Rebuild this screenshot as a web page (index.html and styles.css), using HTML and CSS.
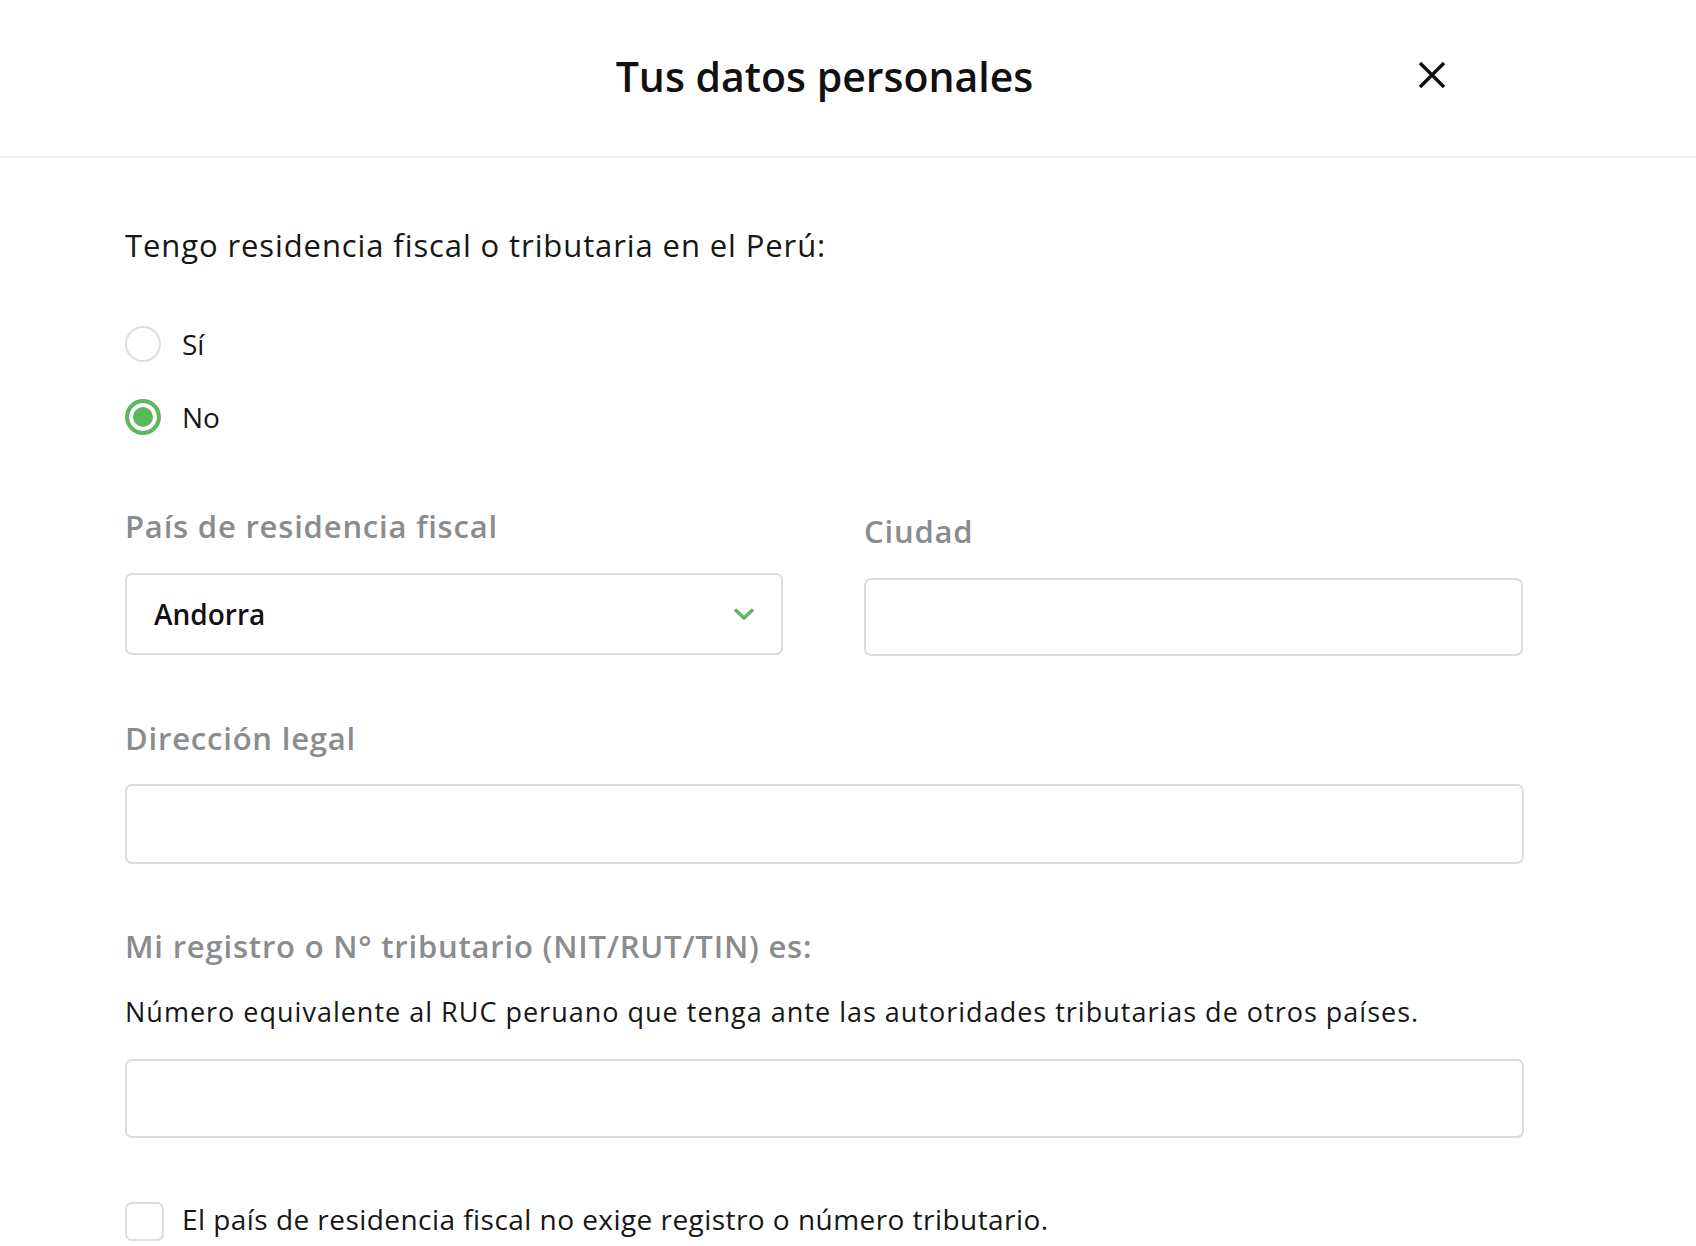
FILE: index.html
```html
<!DOCTYPE html>
<html lang="es">
<head>
<meta charset="utf-8">
<title>Tus datos personales</title>
<link rel="stylesheet" href="styles.css">
</head>
<body>
<div class="modal">
  <header class="modal-header">
    <div class="spacer"></div>
    <h1 class="modal-title">Tus datos personales</h1>
    <button class="close-btn" type="button" aria-label="Cerrar">
      <svg width="28" height="28" viewBox="0 0 28 28"><path d="M2 2 L26 26 M26 2 L2 26" stroke="#111" stroke-width="3.4" fill="none"/></svg>
    </button>
  </header>
  <form class="modal-body">
    <p class="question">Tengo residencia fiscal o tributaria en el Perú:</p>
    <div class="radio-group">
      <label class="radio-row"><span class="radio"></span><span class="option-text">Sí</span></label>
      <label class="radio-row"><span class="radio checked"></span><span class="option-text">No</span></label>
    </div>
    <div class="two-cols">
      <div class="field">
        <div class="field-label">País de residencia fiscal</div>
        <div class="select-box">
          <span class="select-value">Andorra</span>
          <svg class="chevron" width="22" height="14" viewBox="0 0 22 14"><path d="M2 2.5 L11 11 L20 2.5" stroke="#5cb85c" stroke-width="3.4" fill="none"/></svg>
        </div>
      </div>
      <div class="field field-city">
        <div class="field-label">Ciudad</div>
        <div class="text-input short"></div>
      </div>
    </div>
    <div class="field field-block">
      <div class="field-label">Dirección legal</div>
      <div class="text-input"></div>
    </div>
    <div class="field field-block">
      <div class="field-label">Mi registro o N° tributario (NIT/RUT/TIN) es:</div>
      <p class="help">Número equivalente al RUC peruano que tenga ante las autoridades tributarias de otros países.</p>
      <div class="text-input mid"></div>
    </div>
    <label class="check-row"><span class="checkbox"></span><span class="option-text">El país de residencia fiscal no exige registro o número tributario.</span></label>
  </form>
</div>
</body>
</html>
```
FILE: styles.css
```css
html, body {
  margin: 0;
  padding: 0;
  background: #ffffff;
  overflow: hidden;
}
body {
  font-family: "Open Sans", "Noto Sans", "Liberation Sans", sans-serif;
  color: #161616;
}
.modal {
  width: 100%;
}
.modal-header {
  height: 156px;
  border-bottom: 2px solid #efefef;
  display: grid;
  grid-template-columns: 1fr auto 1fr;
  align-items: center;
  padding: 0 172px 0 125px;
}
.modal-title {
  margin: 0;
  font-size: 41px;
  line-height: 50px;
  font-weight: 600;
  color: #111;
  padding-bottom: 4px;
}
.close-btn {
  justify-self: end;
  margin-right: 78px;
  margin-bottom: 6px;
  background: none;
  border: 0;
  padding: 0;
  width: 28px;
  height: 28px;
  display: flex;
}
.modal-body {
  padding: 69px 172px 0 125px;
  display: block;
}
.question {
  margin: 0;
  font-size: 31px;
  line-height: 36px;
  font-weight: 400;
  letter-spacing: 0.9px;
}
.radio-group {
  margin-top: 63px;
  display: flex;
  flex-direction: column;
  gap: 37px;
}
.radio-row, .check-row {
  display: flex;
  align-items: center;
  gap: 21px;
  height: 36px;
}
.radio {
  width: 36px;
  height: 36px;
  box-sizing: border-box;
  border-radius: 50%;
  border: 2px solid #dedede;
  flex: none;
}
.radio.checked {
  border: 4px solid #5cb85c;
  background: #5cb85c;
  box-shadow: inset 0 0 0 4px #ffffff;
}
.option-text {
  font-size: 28px;
  line-height: 34px;
}
.two-cols {
  margin-top: 73px;
  display: grid;
  grid-template-columns: 658px 659px;
  column-gap: 81px;
}
.field-label {
  font-size: 31px;
  line-height: 36px;
  font-weight: 600;
  color: #8a8c8e;
  letter-spacing: 0.8px;
}
.field-city {
  padding-top: 5px;
}
.select-box {
  margin-top: 29px;
  height: 82px;
  box-sizing: border-box;
  border: 2px solid #dcdcdc;
  border-radius: 7px;
  display: flex;
  align-items: center;
  justify-content: space-between;
  padding: 0 26px 0 27px;
}
.select-value {
  font-size: 28px;
  font-weight: 600;
  color: #111;
}
.text-input {
  margin-top: 28px;
  height: 80px;
  box-sizing: border-box;
  border: 2px solid #dcdcdc;
  border-radius: 7px;
}
.text-input.short {
  margin-top: 29px;
  height: 78px;
}
.text-input.mid {
  margin-top: 31px;
  height: 79px;
}
.field-block {
  margin-top: 64px;
}
.help {
  margin: 32px 0 0;
  font-size: 27px;
  line-height: 32px;
  color: #161616;
  letter-spacing: 1px;
}
.check-row {
  margin-top: 64px;
  height: 39px;
  gap: 18px;
}
.checkbox {
  width: 39px;
  height: 39px;
  box-sizing: border-box;
  border: 2px solid #dedede;
  border-radius: 7px;
  flex: none;
}
.check-row .option-text {
  font-size: 28px;
  letter-spacing: 0.45px;
  padding-bottom: 5px;
}
```
